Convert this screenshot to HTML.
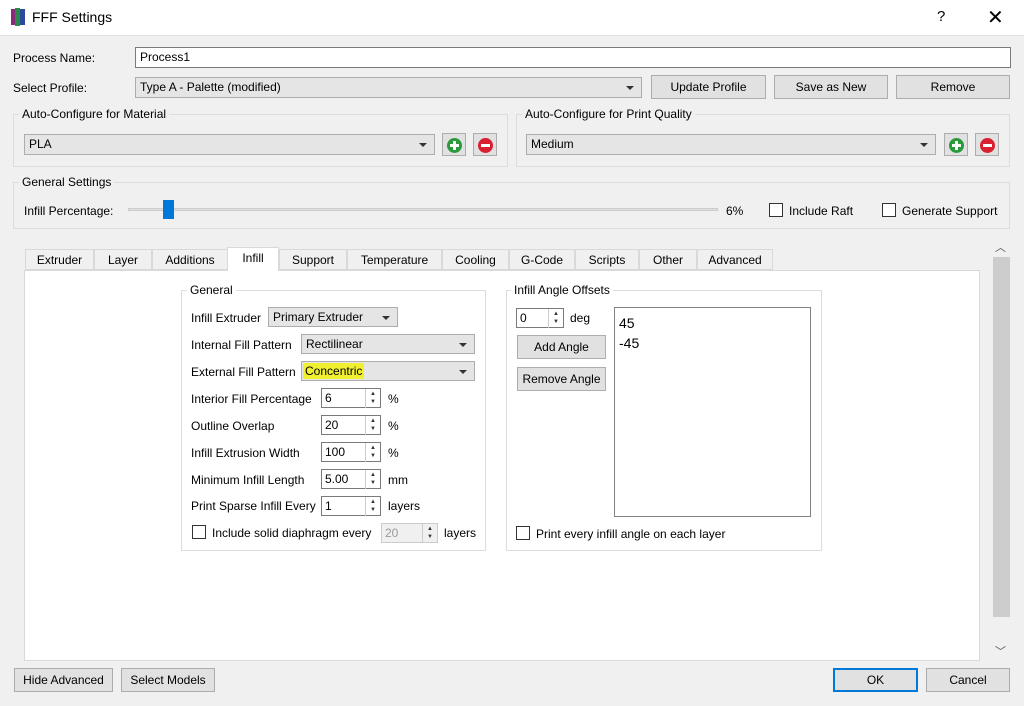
<!DOCTYPE html>
<html><head><style>
*{box-sizing:border-box}
body{margin:0;width:1024px;height:706px;overflow:hidden;background:#f0f0f0;font-family:"Liberation Sans",sans-serif;font-size:12px;color:#000;position:relative}
.a{position:absolute}
.btn{position:absolute;background:#e1e1e1;border:1px solid #adadad;text-align:center;line-height:22px;font-size:12px}
.combo{position:absolute;background:#e5e5e5;border:1px solid #adadad;padding-left:4px;line-height:19px}
.combo:after{content:"";position:absolute;right:7px;top:8px;border-left:4px solid transparent;border-right:4px solid transparent;border-top:4px solid #333}
.grp{position:absolute;border:1px solid #dcdcdc}
.gt{position:absolute;background:#f0f0f0;padding:0 3px}
.spin{position:absolute;background:#fff;border:1px solid #7a7a7a;padding-left:3px;line-height:18px}
.spin:after{content:"▲\A▼";white-space:pre;position:absolute;right:0;top:0;width:14px;height:18px;border-left:1px solid #ccc;font-size:6px;line-height:8px;text-align:center;color:#333;padding-top:1px}
.cb{position:absolute;width:14px;height:14px;border:1px solid #333;background:#fff}
.tab{position:absolute;top:249px;height:21px;border:1px solid #d9d9d9;background:#f0f0f0;text-align:center;line-height:20px}
.ic{position:absolute;left:4px;top:4px;width:15px;height:15px;border-radius:50%}
.ic:before{content:"";position:absolute;left:3px;top:6px;width:9px;height:3px;background:#fff}
.plus:after{content:"";position:absolute;left:6px;top:3px;width:3px;height:9px;background:#fff}
</style></head><body>
<div class="a" style="left:0;top:0;width:1024px;height:36px;background:#fff;border-bottom:1px solid #e0e0e0"></div>
<div class="a" style="left:11px;top:9px;width:4px;height:16px;background:#8a2a7a"></div>
<div class="a" style="left:15px;top:8px;width:5px;height:18px;background:#2a8a4a"></div>
<div class="a" style="left:20px;top:9px;width:5px;height:16px;background:#2a4aa0"></div>
<div class="a" style="left:32px;top:9px;font-size:14px">FFF Settings</div>
<div class="a" style="left:937px;top:8px;font-size:15px">?</div>
<div class="a" style="left:987px;top:5px;font-size:20px">✕</div>

<div class="a" style="left:13px;top:51px">Process Name:</div>
<div class="a" style="left:135px;top:47px;width:876px;height:21px;background:#fff;border:1px solid #7a7a7a;padding-left:4px;line-height:19px">Process1</div>
<div class="a" style="left:13px;top:81px">Select Profile:</div>
<div class="combo" style="left:135px;top:77px;width:507px;height:21px">Type A - Palette (modified)</div>
<div class="btn" style="left:651px;top:75px;width:115px;height:24px">Update Profile</div>
<div class="btn" style="left:774px;top:75px;width:114px;height:24px">Save as New</div>
<div class="btn" style="left:896px;top:75px;width:114px;height:24px">Remove</div>

<div class="grp" style="left:13px;top:114px;width:495px;height:53px"></div>
<div class="gt" style="left:19px;top:107px">Auto-Configure for Material</div>
<div class="combo" style="left:24px;top:134px;width:411px;height:21px">PLA</div>
<div class="btn" style="left:442px;top:133px;width:24px;height:23px"><div class="ic plus" style="background:#2a9a3a"></div></div>
<div class="btn" style="left:473px;top:133px;width:24px;height:23px"><div class="ic" style="background:#d82030"></div></div>
<div class="grp" style="left:516px;top:114px;width:494px;height:53px"></div>
<div class="gt" style="left:522px;top:107px">Auto-Configure for Print Quality</div>
<div class="combo" style="left:526px;top:134px;width:410px;height:21px">Medium</div>
<div class="btn" style="left:944px;top:133px;width:24px;height:23px"><div class="ic plus" style="background:#2a9a3a"></div></div>
<div class="btn" style="left:975px;top:133px;width:24px;height:23px"><div class="ic" style="background:#d82030"></div></div>

<div class="grp" style="left:13px;top:182px;width:997px;height:47px"></div>
<div class="gt" style="left:19px;top:175px">General Settings</div>
<div class="a" style="left:24px;top:204px">Infill Percentage:</div>
<div class="a" style="left:128px;top:208px;width:590px;height:3px;background:#e0e0e0;border:1px solid #ccc"></div>
<div class="a" style="left:163px;top:200px;width:11px;height:19px;background:#0078d7"></div>
<div class="a" style="left:726px;top:204px">6%</div>
<div class="cb" style="left:769px;top:203px"></div><div class="a" style="left:789px;top:204px">Include Raft</div>
<div class="cb" style="left:882px;top:203px"></div><div class="a" style="left:902px;top:204px">Generate Support</div>

<div class="a" style="left:24px;top:270px;width:956px;height:391px;background:#fff;border:1px solid #d9d9d9"></div>
<div class="tab" style="left:25px;width:69px">Extruder</div>
<div class="tab" style="left:94px;width:58px">Layer</div>
<div class="tab" style="left:152px;width:76px">Additions</div>
<div class="tab" style="left:227px;top:247px;height:24px;width:52px;background:#fff;border-bottom:none">Infill</div>
<div class="tab" style="left:279px;width:68px">Support</div>
<div class="tab" style="left:347px;width:95px">Temperature</div>
<div class="tab" style="left:442px;width:67px">Cooling</div>
<div class="tab" style="left:509px;width:66px">G-Code</div>
<div class="tab" style="left:575px;width:64px">Scripts</div>
<div class="tab" style="left:639px;width:58px">Other</div>
<div class="tab" style="left:697px;width:76px">Advanced</div>

<div class="grp" style="left:181px;top:290px;width:305px;height:261px"></div>
<div class="gt" style="left:187px;top:283px;background:#fff">General</div>
<div class="a" style="left:191px;top:311px">Infill Extruder</div>
<div class="combo" style="left:268px;top:307px;width:130px;height:20px">Primary Extruder</div>
<div class="a" style="left:191px;top:338px">Internal Fill Pattern</div>
<div class="combo" style="left:301px;top:334px;width:174px;height:20px">Rectilinear</div>
<div class="a" style="left:191px;top:365px">External Fill Pattern</div>
<div class="combo" style="left:301px;top:361px;width:174px;height:20px"><span style="background:#f0f030;padding:1px 2px;margin-left:-3px">Concentric</span></div>
<div class="a" style="left:191px;top:392px">Interior Fill Percentage</div><div class="spin" style="left:321px;top:388px;width:60px;height:20px">6</div><div class="a" style="left:388px;top:392px">%</div>
<div class="a" style="left:191px;top:419px">Outline Overlap</div><div class="spin" style="left:321px;top:415px;width:60px;height:20px">20</div><div class="a" style="left:388px;top:419px">%</div>
<div class="a" style="left:191px;top:446px">Infill Extrusion Width</div><div class="spin" style="left:321px;top:442px;width:60px;height:20px">100</div><div class="a" style="left:388px;top:446px">%</div>
<div class="a" style="left:191px;top:473px">Minimum Infill Length</div><div class="spin" style="left:321px;top:469px;width:60px;height:20px">5.00</div><div class="a" style="left:388px;top:473px">mm</div>
<div class="a" style="left:191px;top:499px">Print Sparse Infill Every</div><div class="spin" style="left:321px;top:496px;width:60px;height:20px">1</div><div class="a" style="left:388px;top:499px">layers</div>
<div class="cb" style="left:192px;top:525px"></div><div class="a" style="left:212px;top:526px">Include solid diaphragm every</div>
<div class="spin" style="left:381px;top:523px;width:57px;height:20px;border-color:#ccc;background:#f0f0f0;color:#999">20</div><div class="a" style="left:444px;top:526px">layers</div>

<div class="grp" style="left:506px;top:290px;width:316px;height:261px"></div>
<div class="gt" style="left:511px;top:283px;background:#fff">Infill Angle Offsets</div>
<div class="spin" style="left:516px;top:308px;width:48px;height:20px">0</div><div class="a" style="left:570px;top:311px">deg</div>
<div class="btn" style="left:517px;top:335px;width:89px;height:24px">Add Angle</div>
<div class="btn" style="left:517px;top:367px;width:89px;height:24px">Remove Angle</div>
<div class="a" style="left:614px;top:307px;width:197px;height:210px;background:#fff;border:1px solid #828282;padding:5px 4px;font-size:14px;line-height:20px">45<br>-45</div>
<div class="cb" style="left:516px;top:526px"></div><div class="a" style="left:536px;top:527px">Print every infill angle on each layer</div>

<div class="a" style="left:992px;top:237px;width:19px;height:424px;background:#f0f0f0"></div>
<div class="a" style="left:995px;top:239px;font-size:11px;color:#555">︿</div>
<div class="a" style="left:993px;top:257px;width:17px;height:360px;background:#cdcdcd"></div>
<div class="a" style="left:995px;top:643px;font-size:11px;color:#555">﹀</div>

<div class="btn" style="left:14px;top:668px;width:99px;height:24px">Hide Advanced</div>
<div class="btn" style="left:121px;top:668px;width:94px;height:24px">Select Models</div>
<div class="btn" style="left:833px;top:668px;width:85px;height:24px;border:2px solid #0078d7;line-height:20px">OK</div>
<div class="btn" style="left:926px;top:668px;width:84px;height:24px">Cancel</div>
</body></html>
